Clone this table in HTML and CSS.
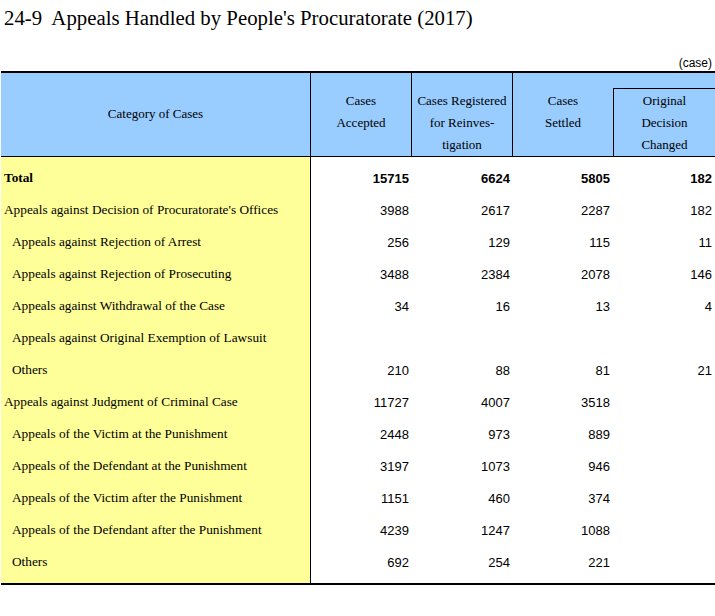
FILE: index.html
```html
<!DOCTYPE html>
<html>
<head>
<meta charset="utf-8">
<link rel="stylesheet" href="styles.css">
</head>
<body>
<h1 class="title">24-9&nbsp; Appeals Handled by People's Procuratorate (2017)</h1>
<div class="unit">(case)</div>
<table class="stats">
  <colgroup>
    <col class="c-cat">
    <col class="c-num">
    <col class="c-num">
    <col class="c-num4">
    <col class="c-num5">
  </colgroup>
  <thead>
    <tr class="h1">
      <th rowspan="2" class="hcat">Category of Cases</th>
      <th rowspan="2" class="hcol">Cases<br>Accepted</th>
      <th rowspan="2" class="hcol">Cases Registered<br>for Reinves-<br>tigation</th>
      <th rowspan="2" class="hcol hset">Cases<br>Settled</th>
      <th class="hblank"></th>
    </tr>
    <tr class="h2">
      <th class="horig">Original<br>Decision<br>Changed</th>
    </tr>
  </thead>
  <tbody>
    <tr class="first total"><td class="cat">Total</td><td>15715</td><td>6624</td><td>5805</td><td>182</td></tr>
    <tr><td class="cat">Appeals against Decision of Procuratorate's Offices</td><td>3988</td><td>2617</td><td>2287</td><td>182</td></tr>
    <tr><td class="cat sub">Appeals against Rejection of Arrest</td><td>256</td><td>129</td><td>115</td><td>11</td></tr>
    <tr><td class="cat sub">Appeals against Rejection of Prosecuting</td><td>3488</td><td>2384</td><td>2078</td><td>146</td></tr>
    <tr><td class="cat sub">Appeals against Withdrawal of the Case</td><td>34</td><td>16</td><td>13</td><td>4</td></tr>
    <tr><td class="cat sub">Appeals against Original Exemption of Lawsuit</td><td></td><td></td><td></td><td></td></tr>
    <tr><td class="cat sub">Others</td><td>210</td><td>88</td><td>81</td><td>21</td></tr>
    <tr><td class="cat">Appeals against Judgment of Criminal Case</td><td>11727</td><td>4007</td><td>3518</td><td></td></tr>
    <tr><td class="cat sub">Appeals of the Victim at the Punishment</td><td>2448</td><td>973</td><td>889</td><td></td></tr>
    <tr><td class="cat sub">Appeals of the Defendant at the Punishment</td><td>3197</td><td>1073</td><td>946</td><td></td></tr>
    <tr><td class="cat sub">Appeals of the Victim after the Punishment</td><td>1151</td><td>460</td><td>374</td><td></td></tr>
    <tr><td class="cat sub">Appeals of the Defendant after the Punishment</td><td>4239</td><td>1247</td><td>1088</td><td></td></tr>
    <tr class="last"><td class="cat sub">Others</td><td>692</td><td>254</td><td>221</td><td></td></tr>
  </tbody>
</table>
</body>
</html>
```

FILE: styles.css
```css
html, body {
  margin: 0;
  padding: 0;
  background: #ffffff;
  color: #000000;
}

body {
  font-family: "Liberation Serif", "Times New Roman", serif;
}

.title {
  margin: 0;
  padding: 6px 0 0 4px;
  font-size: 20.8px;
  font-weight: normal;
  line-height: 24px;
  white-space: nowrap;
}

.unit {
  margin-top: 26px;
  padding-right: 3px;
  text-align: right;
  font-family: "Liberation Sans", Arial, sans-serif;
  font-size: 12px;
  line-height: 14px;
  height: 14px;
}

.stats {
  margin-left: 1px;
  margin-top: 1px;
  width: 714px;
  table-layout: fixed;
  border-collapse: separate;
  border-spacing: 0;
  border-top: 2px solid #000;
  border-bottom: 2px solid #000;
}

.c-cat { width: 310px; }
.c-num { width: 101px; }
.c-num4 { width: 100px; }
.c-num5 { width: 102px; }

.stats th {
  box-sizing: border-box;
  background: #99ccff;
  font-weight: normal;
  font-size: 13px;
  line-height: 22px;
  padding: 0;
  text-align: center;
  border-bottom: 1px solid #000;
}

.h1 { height: 15px; }
.h2 { height: 66px; }

.hcat {
  vertical-align: middle;
  border-right: 1px solid #000;
  padding-bottom: 2px !important;
}

.hcol {
  vertical-align: top;
  padding-top: 17px !important;
  border-right: 1px solid #000;
  white-space: nowrap;
}

.stats th.hset {
  border-right: none;
}

.stats th.hblank {
  border-bottom: none;
}

.stats th.horig {
  vertical-align: top;
  padding-top: 1px;
  border-top: 1px solid #000;
  border-left: 1px solid #000;
}

.stats td {
  box-sizing: border-box;
  height: 32px;
  padding: 0 3px 0 0;
  text-align: right;
  vertical-align: middle;
  font-family: "Liberation Sans", Arial, sans-serif;
  font-size: 13px;
  white-space: nowrap;
}

.stats td.cat {
  background: #ffff99;
  border-right: 1px solid #000;
  text-align: left;
  padding: 0 0 0 3px;
  font-family: "Liberation Serif", "Times New Roman", serif;
  font-size: 13.3px;
}

.stats td.sub {
  padding-left: 11px;
}

.stats tr.first td {
  height: 37px;
  padding-top: 5px;
}

.stats tr.last td {
  height: 37px;
  padding-bottom: 5px;
}

.stats tr.total td {
  font-weight: bold;
}
```
